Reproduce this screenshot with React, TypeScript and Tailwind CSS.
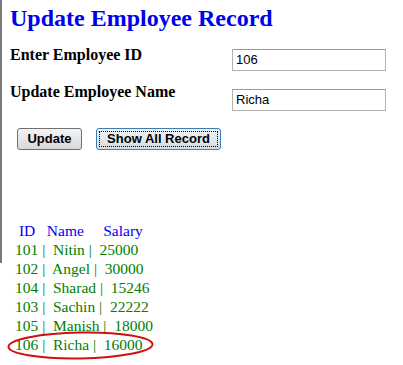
import React from "react";

const rows = [
  ["101", "Nitin", "25000"],
  ["102", "Angel", "30000"],
  ["104", "Sharad", "15246"],
  ["103", "Sachin", "22222"],
  ["105", "Manish", "18000"],
  ["106", "Richa", "16000"],
];

export default function App() {
  return (
    <div className="relative w-[403px] h-[365px] bg-white overflow-hidden font-['Liberation_Serif',serif] text-black">
      <div className="absolute left-0 top-0 w-[2px] h-[263px] bg-[#7a7a7a]" />
      <div className="flex flex-col pl-[10px]">
        <h1 className="pt-[6px] text-[24px] leading-[24px] font-bold text-[#0000f0]">
          Update Employee Record
        </h1>
        <div className="flex items-start mt-[15px]">
          <div className="w-[222px] text-[16px] leading-[20px] font-bold">Enter Employee ID</div>
          <div className="mt-[4px] w-[154px] h-[22px] border border-[#b0b0b0] border-t-[#9a9a9a] flex items-center pl-[3px] font-['Liberation_Sans',sans-serif] text-[13px]">
            106
          </div>
        </div>
        <div className="flex items-start mt-[11px]">
          <div className="w-[222px] text-[16px] leading-[20px] font-bold">Update Employee Name</div>
          <div className="mt-[7px] w-[154px] h-[22px] border border-[#b0b0b0] border-t-[#9a9a9a] flex items-center pl-[3px] font-['Liberation_Sans',sans-serif] text-[13px]">
            Richa
          </div>
        </div>
        <div className="flex mt-[17px] pl-[7px] gap-[14px] font-['Liberation_Sans',sans-serif] text-[13px] font-bold">
          <div className="w-[65px] h-[22px] rounded-[3px] border border-[#707070] bg-gradient-to-b from-[#f4f4f4] to-[#d8d8d8] flex items-center justify-center">
            Update
          </div>
          <div className="relative w-[125px] h-[22px] rounded-[3px] border border-[#3c7fb1] bg-gradient-to-b from-[#eef4f8] to-[#d6dde2] flex items-center justify-center">
            <span className="absolute inset-[2px] border border-dotted border-black" />
            Show All Record
          </div>
        </div>
        <div className="mt-[71px] pl-[5px] text-[15.5px] leading-[19px] whitespace-pre">
          <div className="text-[#0000f0]">{" ID   Name     Salary"}</div>
          {rows.map((r) => (
            <div key={r[0]} className="text-[#008000]">
              {`${r[0]} |  ${r[1]} |  ${r[2]}`}
            </div>
          ))}
        </div>
      </div>
      <svg className="absolute left-0 top-0" width="403" height="365" viewBox="0 0 403 365">
        <ellipse cx="80.5" cy="345.5" rx="72" ry="13" fill="none" stroke="#d01010" strokeWidth="2" transform="rotate(-1 80.5 345.5)" />
      </svg>
    </div>
  );
}
